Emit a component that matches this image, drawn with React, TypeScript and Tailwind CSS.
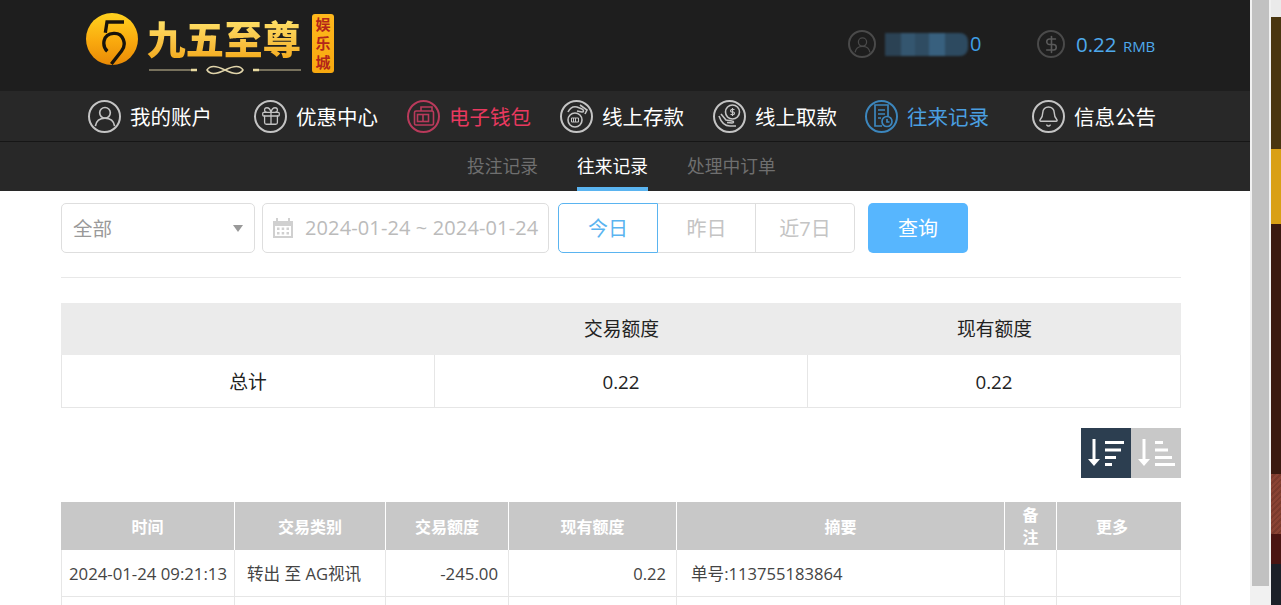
import { Bell, DollarSign, Gift } from 'lucide-react';
import type { ReactNode } from 'react';

const fontStack = { fontFamily: '"Open Sans", "Noto Sans CJK SC", sans-serif' };

function UserGlyph({ size = 22 }: { size?: number }) {
  return (
    <svg width={size} height={size} viewBox="0 0 24 24" fill="none" stroke="currentColor" strokeWidth="1.800">
      <circle cx="12" cy="8.500" r="5.800" />
      <path d="M1.500 23c1-6 5.500-8.500 10.500-8.500S21.500 17 22.500 23" />
    </svg>
  );
}

function WalletGlyph() {
  return (
    <svg width="24" height="24" viewBox="0 0 24 24" fill="none" stroke="currentColor" strokeWidth="1.600">
      <path d="M9 7V3h11v4" />
      <rect x="2.500" y="7" width="19" height="14" rx="1.500" />
      <rect x="5.500" y="10.500" width="11" height="7" />
      <path d="M11 10.500v7" />
    </svg>
  );
}

function DepositGlyph() {
  return (
    <svg width="28" height="28" viewBox="0 0 28 28" fill="none" stroke="currentColor" strokeWidth="1.600">
      <path d="M5 10c2-4 5-6 9-5l5 2c2 1 2 3 0 3l-5-1" />
      <path d="M17 3l7 5-2 4" />
      <circle cx="12" cy="18" r="7" />
      <path d="M8.500 16h7v4h-7zM10.500 16v4M12.500 16v4" strokeWidth="1" />
    </svg>
  );
}

function WithdrawGlyph() {
  return (
    <svg width="28" height="28" viewBox="0 0 28 28" fill="none" stroke="currentColor" strokeWidth="1.600">
      <circle cx="16.500" cy="10" r="7" />
      <path d="M16.500 6v8M18.500 7.500h-3a1.300 1.300 0 0 0 0 2.500h2a1.300 1.300 0 0 1 0 2.500h-3" strokeWidth="1.200" />
      <path d="M3 14c2 6 6 10 11 10h6" />
      <path d="M5 12l5 6 6 1c2 0 2 2 0 2l-5-.5" />
    </svg>
  );
}

function RecordGlyph() {
  return (
    <svg width="26" height="26" viewBox="0 0 26 26" fill="none" stroke="currentColor" strokeWidth="1.700">
      <path d="M13 23H6V2h13v11" />
      <path d="M9 7h7M9 11h7M9 15h3" />
      <circle cx="18" cy="18.500" r="5" />
      <path d="M18 16v3h2.500" />
    </svg>
  );
}

function NavIcon({ color, children }: { color: string; children: ReactNode }) {
  return (
    <span
      className="flex h-[33px] w-[33px] shrink-0 items-center justify-center rounded-full border-2"
      style={{ borderColor: color, color }}
    >
      {children}
    </span>
  );
}

function NavItem({
  label,
  icon,
  className,
  iconColor = '#c4c4c4',
  textClass = 'text-white',
}: {
  label: string;
  icon: ReactNode;
  className: string;
  iconColor?: string;
  textClass?: string;
}) {
  return (
    <div className={`flex items-center gap-[9px] ${className}`}>
      <NavIcon color={iconColor}>{icon}</NavIcon>
      <span className={`pt-[2px] text-[20.500px] leading-none whitespace-nowrap ${textClass}`}>{label}</span>
    </div>
  );
}

function Logo() {
  return (
    <div className="ml-[86px] flex items-start">
      <svg width="52" height="52" viewBox="12 15 156 156" className="mt-[13px] shrink-0">
        <defs>
          <linearGradient id="coin" x1="0" y1="0" x2="0" y2="1">
            <stop offset="0" stopColor="#ffd21f" />
            <stop offset="0.55" stopColor="#f9a90e" />
            <stop offset="1" stopColor="#e98a06" />
          </linearGradient>
        </defs>
        <circle cx="90" cy="93" r="78" fill="url(#coin)" />
        <g fill="none" stroke="#17130c" strokeWidth="10">
          <path d="M126 42H75L70 74" />
          <path d="M76 130C60 115 60 78 95 76c30-2 40 34 23 54L88 168" />
        </g>
      </svg>
      <div className="ml-[9px] flex w-[158px] flex-col">
        <span className="mt-[17px] bg-gradient-to-b from-[#ffe46b] to-[#f3a912] bg-clip-text text-[38.500px] leading-[44px] font-black whitespace-nowrap text-transparent">
          九五至尊
        </span>
        <svg width="156" height="10" viewBox="0 0 156 10" className="mt-[4px]">
          <path d="M2 5h48M106 5h48" stroke="#cfc39a" strokeWidth="1" />
          <path d="M44 5h6M106 5h6" stroke="#e8d9a0" strokeWidth="2.500" />
          <path
            d="M60 5c3-5 10-4 18 0s15 5 18 0c-3-5-10-4-18 0s-15 5-18 0z"
            fill="none"
            stroke="#e0d4aa"
            strokeWidth="1.500"
          />
        </svg>
      </div>
      <div className="mt-[14px] ml-[7px] flex h-[59px] w-[22px] flex-col items-center justify-center rounded-[3px] bg-gradient-to-b from-[#ffb81c] to-[#f7a80f] text-[15px] leading-[19px] font-bold text-[#b3261a]">
        <span>娱</span>
        <span>乐</span>
        <span>城</span>
      </div>
    </div>
  );
}

function Account() {
  return (
    <div className="ml-[514px] flex items-center">
      <span className="flex h-[28px] w-[28px] items-center justify-center rounded-full border-2 border-[#4a4a4a] text-[#4a4a4a]">
        <UserGlyph size={17} />
      </span>
      {/* username is masked in the shot */}
      <div className="relative ml-[9px] h-[30px] w-[152px] text-[20px] leading-[30px] text-[#3f9fe6]">
        <span className="absolute top-0 left-[85px]">0</span>
        <div className="absolute top-[4px] left-0 flex h-[23px] w-[83px] overflow-hidden rounded-r-[8px] blur-[1px]">
          <div className="w-[16px] bg-[#2b4254]" />
          <div className="w-[14px] bg-[#34566f]" />
          <div className="w-[14px] bg-[#2f4c62]" />
          <div className="w-[16px] bg-[#38607e]" />
          <div className="w-[23px] bg-[#2d4a60]" />
        </div>
      </div>
      <span className="flex h-[28px] w-[28px] items-center justify-center rounded-full border-2 border-[#4a4a4a] text-[#5a5a5a]">
        <DollarSign size={19} strokeWidth={2} />
      </span>
      <div className="ml-[11px] text-[20.500px] leading-none whitespace-nowrap text-[#4ea9ec]">
        0.22 <span className="ml-[1px] text-[15px]">RMB</span>
      </div>
    </div>
  );
}

const summaryCols = 'grid grid-cols-[373px_373px_372px]';
const historyCols = 'grid grid-cols-[174px_151px_123px_168px_328px_52px_124px]';

// order: 'desc' has the longest bar on top, 'asc' the shortest
function SortIcon({ order }: { order: 'desc' | 'asc' }) {
  const bars = order === 'desc' ? [19, 16, 11, 7] : [8, 13, 17, 20];
  return (
    <svg width="50" height="50" viewBox="0 0 50 50">
      <path d="M13 11v20" stroke="#fff" strokeWidth="3" />
      <path d="M7 31h12l-6 7z" fill="#fff" />
      {bars.map((w, i) => (
        <rect key={i} x={24} y={[13, 20.500, 28, 35][i]} width={w} height="3" fill="#fff" />
      ))}
    </svg>
  );
}

function Tab({ label, active }: { label: string; active?: boolean }) {
  return (
    <div
      className={`flex h-[49px] items-center border-b-[4px] pt-[4px] text-[17.750px] ${
        active ? 'border-[#5ab4f0] text-white' : 'border-transparent text-[#6f6f6f]'
      }`}
    >
      {label}
    </div>
  );
}

export default function App() {
  return (
    <div className="flex h-[605px] w-[1281px] overflow-hidden bg-white" style={fontStack}>
      <div className="w-[1250px] shrink-0">
        <header className="flex h-[91px] items-start bg-[#1e1e1e]">
          <Logo />
          <div className="mt-[29px]">
            <Account />
          </div>
        </header>

        <nav className="flex h-[51px] items-center border-b border-[#161616] bg-[#282828] pl-[88px]">
          <NavItem label="我的账户" className="" icon={<UserGlyph />} />
          <NavItem label="优惠中心" className="ml-[42px]" icon={<Gift size={22} strokeWidth={1.400} />} />
          <NavItem
            label="电子钱包"
            className="ml-[29px]"
            iconColor="#b93a5b"
            textClass="text-[#e8395f]"
            icon={<WalletGlyph />}
          />
          <NavItem label="线上存款" className="ml-[29px]" icon={<DepositGlyph />} />
          <NavItem label="线上取款" className="ml-[29px]" icon={<WithdrawGlyph />} />
          <NavItem
            label="往来记录"
            className="ml-[28px]"
            iconColor="#3c86bd"
            textClass="text-[#4a9fe0]"
            icon={<RecordGlyph />}
          />
          <NavItem label="信息公告" className="ml-[43px]" icon={<Bell size={23} strokeWidth={1.500} />} />
        </nav>

        <div className="flex h-[49px] gap-[39px] bg-[#282828] pl-[467px]">
          <Tab label="投注记录" />
          <Tab label="往来记录" active />
          <Tab label="处理中订单" />
        </div>

        <main className="px-[61px] pr-[69px] pt-[12px]">
          <div className="flex h-[50px] items-stretch">
            <div className="flex w-[194px] items-center justify-between rounded-[5px] border border-[#dedede] px-[11px] pt-[1px] text-[19.500px] text-[#999]">
              <span>全部</span>
              <span className="h-0 w-0 border-x-[5px] border-t-[7px] border-x-transparent border-t-[#999]" />
            </div>
            <div className="ml-[7px] flex w-[287px] items-center rounded-[5px] border border-[#dedede] pl-[9px] text-[20px] whitespace-nowrap text-[#bbb]">
              <svg width="22" height="22" viewBox="0 0 22 22" className="mr-[11px] shrink-0" fill="#d0d0d0">
                <path d="M1 4h3V1h2v3h10V1h2v3h3v17H1z" />
                <path d="M3 9h16v10H3z" fill="#fff" />
                <path d="M5 10.500h2.500V13H5zM9.700 10.500h2.500V13H9.700zM14.500 10.500H17V13h-2.500zM5 15h2.500v2.500H5zM9.700 15h2.500v2.500H9.700zM14.500 15H17v2.500h-2.500z" />
              </svg>
              <span className="tracking-[0.12px]">2024-01-24 ~ 2024-01-24</span>
            </div>
            <div className="ml-[9px] flex w-[297px] text-[20px] text-[#c4c4c4]">
              <div className="flex w-[100px] items-center justify-center rounded-l-[5px] border border-[#5ab4f0] pt-[1px] text-[#5ab4f0]">今日</div>
              <div className="flex w-[98px] items-center justify-center border-y border-r border-[#dedede] pt-[1px]">昨日</div>
              <div className="flex w-[99px] items-center justify-center rounded-r-[5px] border-y border-r border-[#dedede] pt-[1px]">近7日</div>
            </div>
            <button className="ml-[13px] w-[100px] rounded-[5px] bg-[#57b6fe] pt-[1px] text-[20px] text-white">查询</button>
          </div>

          <div className="mt-[24px] border-t border-[#e8e8e8]" />

          <div className="mt-[25px] border-x border-b border-[#e6e6e6] text-[18.750px] leading-none text-[#222]">
            <div className="-mx-px grid h-[52px] grid-cols-[374px_373px_373px] items-center bg-[#ebebeb] pt-[1px] text-center">
              <span />
              <span>交易额度</span>
              <span>现有额度</span>
            </div>
            <div className={`${summaryCols} h-[52px] items-stretch text-center`}>
              <span className="flex items-center justify-center border-r border-[#e6e6e6] pt-[2px]">总计</span>
              <span className="flex items-center justify-center border-r border-[#e6e6e6] pt-[2px]">0.22</span>
              <span className="flex items-center justify-center pt-[2px]">0.22</span>
            </div>
          </div>

          <div className="mt-[20px] flex justify-end">
            <div className="h-[50px] w-[50px] bg-[#2c3e50]">
              <SortIcon order="desc" />
            </div>
            <div className="h-[50px] w-[50px] bg-[#c8c8c8]">
              <SortIcon order="asc" />
            </div>
          </div>

          <div className={`${historyCols} mt-[24px] h-[48px] bg-[#c8c8c8] text-[16px] font-bold text-white`}>
            {['时间', '交易类别', '交易额度', '现有额度', '摘要'].map((h) => (
              <div key={h} className="flex items-center justify-center border-r border-white pt-[1px]">
                {h}
              </div>
            ))}
            <div className="flex items-center justify-center border-r border-white text-center leading-[22px]">
              备<br />注
            </div>
            <div className="flex items-center justify-center pt-[1px] pr-[14px]">更多</div>
          </div>
          <div className={`${historyCols} h-[47px] border-b border-[#e6e6e6] text-[16.600px] text-[#444]`}>
            <div className="flex items-center justify-center border-x border-[#e6e6e6] pt-[2px] text-[16.750px] whitespace-nowrap">2024-01-24 09:21:13</div>
            <div className="flex items-center border-r border-[#e6e6e6] pt-[2px] pl-[12px]">转出 至 AG视讯</div>
            <div className="flex items-center justify-end border-r border-[#e6e6e6] pt-[2px] pr-[10px] text-[16.800px]">-245.00</div>
            <div className="flex items-center justify-end border-r border-[#e6e6e6] pt-[2px] pr-[10px]">0.22</div>
            <div className="flex items-center border-r border-[#e6e6e6] pt-[2px] pl-[14px]">单号:113755183864</div>
            <div className="border-r border-[#e6e6e6]" />
            <div className="border-r border-[#e6e6e6]" />
          </div>
          <div className={`${historyCols} h-[12px]`}>
            <div className="border-x border-[#e6e6e6]" />
            <div className="border-r border-[#e6e6e6]" />
            <div className="border-r border-[#e6e6e6]" />
            <div className="border-r border-[#e6e6e6]" />
            <div className="border-r border-[#e6e6e6]" />
            <div className="border-r border-[#e6e6e6]" />
            <div className="border-r border-[#e6e6e6]" />
          </div>
        </main>
      </div>

      {/* browser scrollbar */}
      <div className="flex w-[21px] shrink-0 flex-col bg-[#f1f1f1] px-[2px]">
        <div className="h-[586px] bg-[#c1c1c1]" />
      </div>

      {/* edge of the window behind */}
      <div className="flex w-[10px] shrink-0 flex-col">
        <div className="h-[17px] bg-[#eaeaea]" />
        <div className="h-[132px] bg-[#4a3610]" />
        <div className="h-[75px] bg-[#d9a015]" />
        <div className="h-[250px] bg-[#3a1a10]" />
        <div className="h-[60px] bg-[repeating-linear-gradient(135deg,#8a4334_0,#8a4334_2px,#7a3a2d_2px,#7a3a2d_4px)]" />
        <div className="h-[30px] bg-[#4a1512]" />
        <div className="h-[41px] bg-[#1c2028]" />
      </div>
    </div>
  );
}
